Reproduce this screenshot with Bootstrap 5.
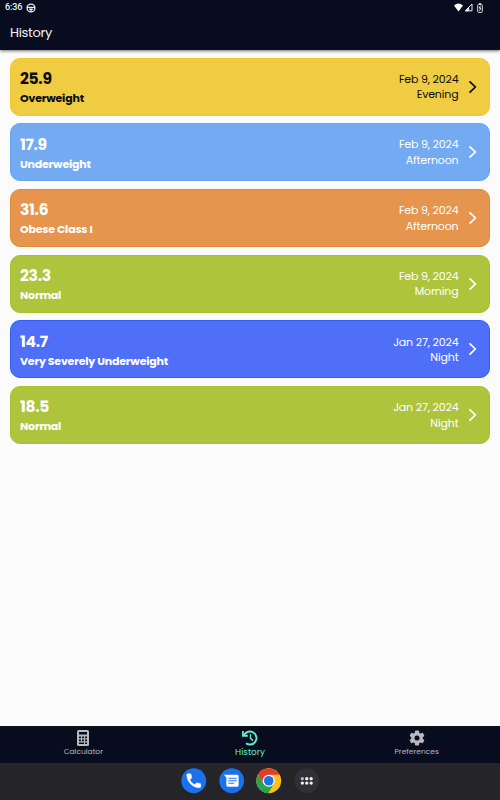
<!DOCTYPE html>
<html lang="en">
<head>
<meta charset="utf-8">
<meta name="viewport" content="width=device-width, initial-scale=1">
<title>History</title>
<link href="https://cdn.jsdelivr.net/npm/bootstrap@5.3.0/dist/css/bootstrap.min.css" rel="stylesheet">
<style>
body{font-family:Poppins,Inter,"Open Sans",sans-serif;background:#fbfbfb;font-size:11px}
svg{display:block;flex:none}
.screen{height:800px;width:500px}
.top-area{background:#070c1f;height:50px;box-shadow:0 1px 3px rgba(0,0,0,.55);color:#f4f4f6}
.status{height:15px;padding:0 17px 0 5px;font:500 9px/15px Roboto,sans-serif;letter-spacing:-.1px}
.wave{margin-right:1px}
.title-text{height:35px;line-height:36px;padding-left:10px;font-size:13px;letter-spacing:-.3px}
.records{padding:7.5px 10px 0;gap:7.7px}
.record{height:58px;border-radius:10px;padding:0 10px 0 9px;color:#fff;border:1px solid}
.c-over{background:#f0cc43;border-color:#efc929;color:#0b0b0b}
.c-under{background:#74aaf1;border-color:#68a4f1}
.c-obese{background:#e5954d;border-color:#e08b30}
.c-normal{background:#afc43d;border-color:#a9c129}
.c-severe{background:#506ff8;border-color:#305ff6}
.bmi{font-size:15.5px;line-height:20px;font-weight:700;letter-spacing:-.3px;padding-top:4px}
.label-text{font-size:11px;line-height:19px;font-weight:700;letter-spacing:-.2px}
.when{font-size:11px;line-height:15.5px;margin-right:9.5px;letter-spacing:-.15px;padding-top:1.5px}
.chev{margin-right:1px}
.tabs{height:37px;background:#070c1f;border-top:1px solid #111;color:#b8b9be;font-size:7.5px}
.tab-item{padding-top:3px;line-height:12.5px}
.tab-item.current{color:#64ecc6;font-size:8.8px;line-height:12px}
.dock{height:37px;background:#252529;gap:12px;padding-bottom:1px}
</style>
</head>
<body>
<div class="screen d-flex flex-column overflow-hidden">
<header class="top-area flex-shrink-0">
  <div class="status d-flex align-items-center">
    <span>6:36</span>
    <svg class="ms-1" width="10" height="10" viewBox="0 0 10 10" fill="none" stroke="#e8e8ec" stroke-width="1.4"><circle cx="5" cy="5" r="3.9"/><path d="M1 4.4h8M3.2 6.3h3.6M5 6.5V9"/></svg>
    <div class="ms-auto d-flex align-items-center">
      <svg class="wave" width="9" height="9" viewBox="0 0 9 9" fill="#fff"><path d="M0 2.4Q4.5-1.4 9 2.4L4.5 8.4Z"/></svg>
      <svg width="9" height="9" viewBox="0 0 9 9" fill="none" stroke="#eee"><path d="M1.3 7.8 8 1v6.8Z"/><path fill="#eee" d="M1.3 7.8 4.7 4.5v3.3Z"/></svg>
      <svg class="ms-1" width="6" height="10" viewBox="0 0 6 10" fill="none" stroke="#ddd"><rect x=".7" y="1.4" width="4.6" height="8" rx="1"/><path d="M2 .6h2M3.6 2.6 2 5h2L2.5 7.8"/></svg>
    </div>
  </div>
  <div class="title-text"><span>History</span></div>
</header>
<main class="records d-flex flex-column flex-grow-1">
  <div class="record c-over d-flex align-items-center"><div><div class="bmi">25.9</div><div class="label-text">Overweight</div></div><div class="when ms-auto text-end">Feb 9, 2024<br>Evening</div><svg class="chev" width="10" height="14" viewBox="0 0 10 14" fill="none" stroke="currentColor" stroke-width="1.7"><path d="M1.5 1.3 7.3 7l-5.8 5.7"/></svg></div>
  <div class="record c-under d-flex align-items-center"><div><div class="bmi">17.9</div><div class="label-text">Underweight</div></div><div class="when ms-auto text-end">Feb 9, 2024<br>Afternoon</div><svg class="chev" width="10" height="14" viewBox="0 0 10 14" fill="none" stroke="currentColor" stroke-width="1.7"><path d="M1.5 1.3 7.3 7l-5.8 5.7"/></svg></div>
  <div class="record c-obese d-flex align-items-center"><div><div class="bmi">31.6</div><div class="label-text">Obese Class I</div></div><div class="when ms-auto text-end">Feb 9, 2024<br>Afternoon</div><svg class="chev" width="10" height="14" viewBox="0 0 10 14" fill="none" stroke="currentColor" stroke-width="1.7"><path d="M1.5 1.3 7.3 7l-5.8 5.7"/></svg></div>
  <div class="record c-normal d-flex align-items-center"><div><div class="bmi">23.3</div><div class="label-text">Normal</div></div><div class="when ms-auto text-end">Feb 9, 2024<br>Morning</div><svg class="chev" width="10" height="14" viewBox="0 0 10 14" fill="none" stroke="currentColor" stroke-width="1.7"><path d="M1.5 1.3 7.3 7l-5.8 5.7"/></svg></div>
  <div class="record c-severe d-flex align-items-center"><div><div class="bmi">14.7</div><div class="label-text">Very Severely Underweight</div></div><div class="when ms-auto text-end">Jan 27, 2024<br>Night</div><svg class="chev" width="10" height="14" viewBox="0 0 10 14" fill="none" stroke="currentColor" stroke-width="1.7"><path d="M1.5 1.3 7.3 7l-5.8 5.7"/></svg></div>
  <div class="record c-normal d-flex align-items-center"><div><div class="bmi">18.5</div><div class="label-text">Normal</div></div><div class="when ms-auto text-end">Jan 27, 2024<br>Night</div><svg class="chev" width="10" height="14" viewBox="0 0 10 14" fill="none" stroke="currentColor" stroke-width="1.7"><path d="M1.5 1.3 7.3 7l-5.8 5.7"/></svg></div>
</main>
<nav class="tabs d-flex flex-shrink-0">
  <div class="tab-item d-flex flex-column align-items-center w-100">
    <svg width="12" height="16" viewBox="0 0 12 16"><rect width="12" height="16" rx="1.5" fill="#b8b9be"/><g fill="#070c1f"><path d="M2 2h8v2.5H2zM2 6.5h2v1.7H2zM5 6.5h2v1.7H5zM8 6.5h2v1.7H8zM2 9.5h2v1.7H2zM5 9.5h2v1.7H5zM8 9.5h2v1.7H8zM2 12.5h5v1.5H2zM8 12.5h2v1.5H8z"/></g></svg>
    <span>Calculator</span>
  </div>
  <div class="tab-item current d-flex flex-column align-items-center w-100">
    <svg width="16" height="16" viewBox="0 0 16 16" fill="none" stroke="currentColor" stroke-width="1.9"><path d="M2.2 5A6.5 6.5 0 1 1 4 13.2"/><path d="M.9 1v4.8h4.9"/><path stroke-width="1.4" d="M8.5 4.2v4.2l2.5 2.2"/></svg>
    <span>History</span>
  </div>
  <div class="tab-item d-flex flex-column align-items-center w-100">
    <svg width="16" height="16" viewBox="0 0 16 16"><g fill="#b8b9be"><circle cx="8" cy="8" r="5.8"/><rect x="5.9" y=".4" width="4.2" height="15.2" rx="1"/><rect x="5.9" y=".4" width="4.2" height="15.2" rx="1" transform="rotate(60 8 8)"/><rect x="5.9" y=".4" width="4.2" height="15.2" rx="1" transform="rotate(120 8 8)"/></g><circle cx="8" cy="8" r="2.5" fill="#070c1f"/></svg>
    <span>Preferences</span>
  </div>
</nav>
<footer class="dock d-flex flex-shrink-0 justify-content-center align-items-center">
  <svg width="25.5" height="25.5" viewBox="0 0 26 26"><circle cx="13" cy="13" r="12.7" fill="#1b72e8"/><path transform="translate(3.7 3.7) scale(.775)" fill="#fff" stroke="#fff" d="M6.6 10.8c1.4 2.8 3.8 5.1 6.6 6.6l2.2-2.2c.3-.3.7-.4 1-.2 1.1.4 2.3.6 3.6.6.6 0 1 .4 1 1V20c0 .6-.4 1-1 1C10.6 21 3 13.4 3 4c0-.6.4-1 1-1h3.5c.6 0 1 .4 1 1 0 1.3.2 2.5.6 3.6.1.3 0 .7-.2 1z"/></svg>
  <svg width="25.5" height="25.5" viewBox="0 0 26 26"><circle cx="13" cy="13" r="12.7" fill="#1b72e8"/><path fill="#fff" d="M5 7h13.5a1.5 1.5 0 0 1 1.5 1.5v9a1.5 1.5 0 0 1-1.5 1.5H9a1.5 1.5 0 0 1-1.5-1.5V10z"/><path stroke="#1b72e8" d="M9.5 10.5h8.5M9.5 13h8.5M9.5 15.5h6"/></svg>
  <svg width="25.5" height="25.5" viewBox="0 0 26 26"><circle cx="13" cy="13" r="12.7" fill="#fbc116"/><path fill="#2ba24c" d="M2 6.65 7.8 16 13 19 18.2 16 12.6 25.7A12.7 12.7 0 0 1 2 6.65Z"/><path fill="#e33b2e" d="M2 6.65A12.7 12.7 0 0 1 24 7H13L7.8 16Z"/><circle cx="13" cy="13" r="6.2" fill="#fff"/><circle cx="13" cy="13" r="4.9" fill="#1b72e8"/></svg>
  <svg width="25.5" height="25.5" viewBox="0 0 26 26"><circle cx="13" cy="13" r="12.7" fill="#303035"/><g fill="#f1f1f5"><circle cx="8.5" cy="10.9" r="1.7" fill="#9fbcf5"/><circle cx="13" cy="10.9" r="1.7"/><circle cx="17.5" cy="10.9" r="1.7"/><circle cx="8.5" cy="15.4" r="1.7"/><circle cx="13" cy="15.4" r="1.7"/><circle cx="17.5" cy="15.4" r="1.7"/></g></svg>
</footer>
</div>
<script src="https://cdn.jsdelivr.net/npm/bootstrap@5.3.0/dist/js/bootstrap.bundle.min.js"></script>
</body>
</html>
